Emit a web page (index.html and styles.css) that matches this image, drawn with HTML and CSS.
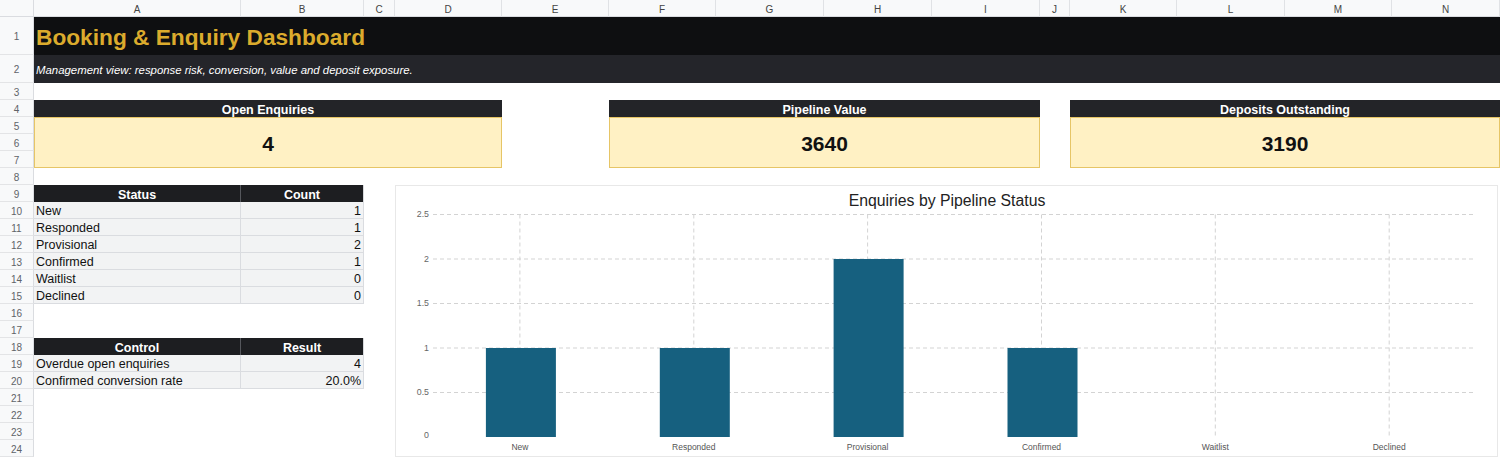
FILE: index.html
```html
<!DOCTYPE html>
<html>
<head>
<meta charset="utf-8">
<link rel="stylesheet" href="styles.css">
</head>
<body>
<div class="sheet">
  <div class="rowheads">
    <div class="corner"></div>
    <div class="rh rh-title">1</div>
    <div class="rh rh-sub">2</div>
    <div class="rh">3</div><div class="rh">4</div><div class="rh">5</div><div class="rh">6</div>
    <div class="rh">7</div><div class="rh">8</div><div class="rh">9</div><div class="rh">10</div>
    <div class="rh">11</div><div class="rh">12</div><div class="rh">13</div><div class="rh">14</div>
    <div class="rh">15</div><div class="rh">16</div><div class="rh">17</div><div class="rh">18</div>
    <div class="rh">19</div><div class="rh">20</div><div class="rh">21</div><div class="rh">22</div>
    <div class="rh">23</div><div class="rh">24</div>
  </div>
  <div class="main">
    <div class="colheads">
      <div class="ch">A</div><div class="ch">B</div><div class="ch">C</div><div class="ch">D</div>
      <div class="ch">E</div><div class="ch">F</div><div class="ch">G</div><div class="ch">H</div>
      <div class="ch">I</div><div class="ch">J</div><div class="ch">K</div><div class="ch">L</div>
      <div class="ch">M</div><div class="ch">N</div>
    </div>
    <div class="body">
      <div class="title">Booking &amp; Enquiry Dashboard</div>
      <div class="subtitle">Management view: response risk, conversion, value and deposit exposure.</div>

      <div class="kpi kpi-1">
        <div class="kpi-head">Open Enquiries</div>
        <div class="kpi-value">4</div>
      </div>
      <div class="kpi kpi-2">
        <div class="kpi-head">Pipeline Value</div>
        <div class="kpi-value">3640</div>
      </div>
      <div class="kpi kpi-3">
        <div class="kpi-head">Deposits Outstanding</div>
        <div class="kpi-value">3190</div>
      </div>

      <div class="tbl tbl-status">
        <div class="th">Status</div><div class="th">Count</div>
        <div class="td">New</div><div class="td num">1</div>
        <div class="td">Responded</div><div class="td num">1</div>
        <div class="td">Provisional</div><div class="td num">2</div>
        <div class="td">Confirmed</div><div class="td num">1</div>
        <div class="td">Waitlist</div><div class="td num">0</div>
        <div class="td">Declined</div><div class="td num">0</div>
      </div>

      <div class="tbl tbl-control">
        <div class="th">Control</div><div class="th">Result</div>
        <div class="td">Overdue open enquiries</div><div class="td num">4</div>
        <div class="td">Confirmed conversion rate</div><div class="td num">20.0%</div>
      </div>

      <div class="chart">
        <svg class="chart-svg" width="1102" height="270" viewBox="0 0 1102 270">
          <text class="chart-title" x="551" y="15.5">Enquiries by Pipeline Status</text>
          <g class="grid">
            <line x1="37" y1="28.5" x2="1080" y2="28.5"/>
            <line x1="37" y1="73" x2="1080" y2="73"/>
            <line x1="37" y1="117.5" x2="1080" y2="117.5"/>
            <line x1="37" y1="162" x2="1080" y2="162"/>
            <line x1="37" y1="206.5" x2="1080" y2="206.5"/>
            <line x1="123.9" y1="28.5" x2="123.9" y2="251"/>
            <line x1="297.8" y1="28.5" x2="297.8" y2="251"/>
            <line x1="471.6" y1="28.5" x2="471.6" y2="251"/>
            <line x1="645.5" y1="28.5" x2="645.5" y2="251"/>
            <line x1="819.3" y1="28.5" x2="819.3" y2="251"/>
            <line x1="993.2" y1="28.5" x2="993.2" y2="251"/>
          </g>
          <g class="ylabels">
            <text x="33" y="29">2.5</text>
            <text x="33" y="73.5">2</text>
            <text x="33" y="118">1.5</text>
            <text x="33" y="162.5">1</text>
            <text x="33" y="207">0.5</text>
            <text x="33" y="250">0</text>
          </g>
          <g class="bars">
            <rect x="89.9" y="162" width="70" height="89"/>
            <rect x="263.8" y="162" width="70" height="89"/>
            <rect x="437.6" y="73" width="70" height="178"/>
            <rect x="611.5" y="162" width="70" height="89"/>
          </g>
          <g class="xlabels">
            <text x="123.9" y="261.5">New</text>
            <text x="297.8" y="261.5">Responded</text>
            <text x="471.6" y="261.5">Provisional</text>
            <text x="645.5" y="261.5">Confirmed</text>
            <text x="819.3" y="261.5">Waitlist</text>
            <text x="993.2" y="261.5">Declined</text>
          </g>
        </svg>
      </div>
    </div>
  </div>
</div>
</body>
</html>
```

FILE: styles.css
```css
* { box-sizing: border-box; }
html, body { margin: 0; padding: 0; background: #ffffff; }
body {
  font-family: "Liberation Sans", Arial, sans-serif;
  color: #111;
  width: 1500px;
  height: 459px;
  overflow: hidden;
}
.sheet { display: flex; }

.rowheads { width: 34px; display: flex; flex-direction: column; flex: none; }
.corner {
  height: 17px;
  background: #f8f9fa;
  border-right: 1px solid #dadce0;
  border-bottom: 1px solid #dadce0;
}
.rh {
  height: 17px;
  background: #f8f9fa;
  border-right: 1px solid #dadce0;
  border-bottom: 1px solid #e3e4e6;
  font-size: 10px;
  color: #5f6368;
  display: flex;
  align-items: center;
  justify-content: center;
  padding-top: 2px;
}
.rh-title { height: 38px; }
.rh-sub { height: 28px; }

.main { flex: 1; display: flex; flex-direction: column; }
.colheads, .body {
  display: grid;
  grid-template-columns: 207px 123px 31px 107px 107px 107px 108px 108px 108px 30px 107px 108px 107px 108px;
}
.colheads { height: 17px; }
.ch {
  background: #f8f9fa;
  border-right: 1px solid #e0e2e5;
  border-bottom: 1px solid #dadce0;
  font-size: 10px;
  color: #444;
  display: flex;
  align-items: center;
  justify-content: center;
  padding-top: 2px;
}
.body { grid-template-rows: 38px 28px repeat(22, 17px); }

.title {
  grid-column: 1 / -1;
  grid-row: 1;
  background: #0e0f11;
  color: #dbab2d;
  font-weight: bold;
  font-size: 22.7px;
  display: flex;
  align-items: center;
  padding-left: 2px;
  padding-top: 2px;
}
.subtitle {
  grid-column: 1 / -1;
  grid-row: 2;
  background: #24252a;
  color: #ffffff;
  font-style: italic;
  font-size: 11.4px;
  display: flex;
  align-items: center;
  padding-left: 2px;
  padding-top: 2px;
}

.kpi { grid-row: 4 / 8; display: flex; flex-direction: column; }
.kpi-1 { grid-column: 1 / 5; }
.kpi-2 { grid-column: 6 / 10; }
.kpi-3 { grid-column: 11 / 15; }
.kpi-head {
  height: 17px;
  background: #232428;
  color: #ffffff;
  font-weight: bold;
  font-size: 12.5px;
  display: flex;
  align-items: center;
  justify-content: center;
  padding-top: 2px;
}
.kpi-value {
  flex: 1;
  background: #fff1c4;
  border: 1px solid #e6c566;
  font-weight: bold;
  font-size: 21px;
  color: #111;
  display: flex;
  align-items: center;
  justify-content: center;
  padding-top: 2px;
}

.tbl {
  grid-column: 1 / 3;
  display: grid;
  grid-template-columns: 207px 123px;
  grid-auto-rows: 17px;
}
.tbl-status { grid-row: 9 / 16; }
.tbl-control { grid-row: 18 / 21; }
.th {
  background: #1d1e21;
  color: #ffffff;
  font-weight: bold;
  font-size: 12.5px;
  display: flex;
  align-items: center;
  justify-content: center;
  border-right: 1px solid #55575c;
  padding-top: 2px;
}
.th:nth-child(2) { border-right: 1px solid #d7d9dc; }
.td {
  background: #f2f3f4;
  border-right: 1px solid #dadce0;
  border-bottom: 1px solid #dadce0;
  font-size: 12.5px;
  color: #111;
  display: flex;
  align-items: center;
  padding-left: 2px;
  padding-top: 2px;
}
.td.num { justify-content: flex-end; padding-right: 2px; }

.chart {
  grid-column: 4 / 15;
  grid-row: 9 / 25;
  margin-right: 2px;
  background: #ffffff;
  border: 1px solid #e8e8e8;
}
.chart-svg { display: block; }
.chart-title {
  font-family: "Liberation Sans", Arial, sans-serif;
  font-size: 15.8px;
  fill: #222;
  text-anchor: middle;
  dominant-baseline: middle;
}
.grid line { stroke: #d3d3d3; stroke-width: 1; stroke-dasharray: 4 3; }
.ylabels text {
  font-family: "Liberation Sans", Arial, sans-serif;
  font-size: 8.8px;
  fill: #666;
  text-anchor: end;
  dominant-baseline: middle;
}
.xlabels text {
  font-family: "Liberation Sans", Arial, sans-serif;
  font-size: 8.5px;
  fill: #555;
  text-anchor: middle;
  dominant-baseline: middle;
}
.bars rect { fill: #16607f; }
```
